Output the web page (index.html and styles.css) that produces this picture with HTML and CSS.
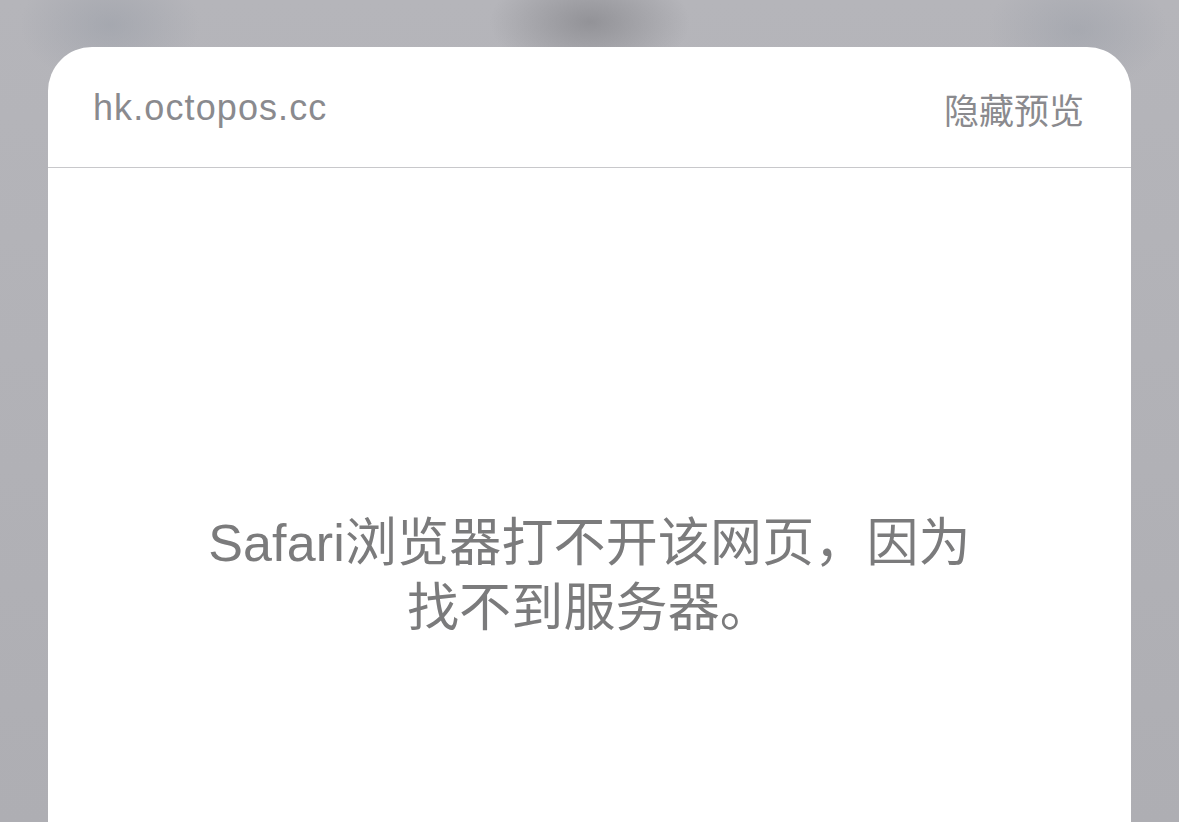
FILE: index.html
```html
<!DOCTYPE html>
<html lang="zh-CN">
<head>
  <meta charset="UTF-8">
  <meta name="viewport" content="width=device-width, initial-scale=1.0">
  <title>预览</title>
  <link rel="stylesheet" href="styles.css">
</head>
<body>
  <div class="backdrop">
    <div class="preview">
      <div class="preview-header">
        <div class="host">hk.octopos.cc</div>
        <div class="hide-btn">隐藏预览</div>
      </div>
      <div class="preview-body">
        <p class="message">Safari浏览器打不开该网页，因为<br>找不到服务器。</p>
      </div>
    </div>
  </div>
</body>
</html>
```

FILE: styles.css
```css
html, body {
  margin: 0;
  padding: 0;
  height: 100%;
  overflow: hidden;
}
body {
  font-family: 'Liberation Sans', 'Noto Sans CJK SC', sans-serif;
  background:
    radial-gradient(ellipse 90px 60px at 110px 25px, rgba(150,155,165,0.5), rgba(150,155,165,0) 100%),
    radial-gradient(ellipse 100px 55px at 590px 22px, rgba(135,135,140,0.75), rgba(135,135,140,0) 100%),
    radial-gradient(ellipse 90px 60px at 1078px 30px, rgba(150,155,165,0.45), rgba(150,155,165,0) 100%),
    linear-gradient(180deg, #b5b5ba, #aeaeb3);
}
.backdrop {
  padding: 47px 48px 0;
  height: 100%;
  box-sizing: border-box;
}
.preview {
  background: #fff;
  border-radius: 44px 44px 0 0;
  height: 775px;
  overflow: hidden;
}
.preview-header {
  display: flex;
  align-items: center;
  justify-content: space-between;
  height: 121px;
  padding: 2px 47px 0 45px;
  box-sizing: border-box;
  border-bottom: 1px solid #c8c8cb;
  color: #8a8a8e;
}
.host {
  font-size: 36px;
  letter-spacing: 1.1px;
}
.hide-btn {
  font-size: 35px;
}
.preview-body {
  padding-top: 343px;
  text-align: center;
}
.message {
  margin: 0;
  font-size: 52px;
  line-height: 65px;
  letter-spacing: 0.15px;
  color: #7b7b7c;
}
```
